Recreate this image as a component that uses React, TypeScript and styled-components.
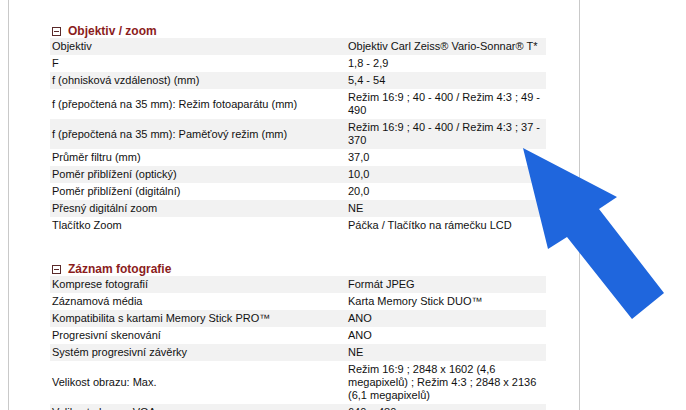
import React from 'react';
import styled, { createGlobalStyle } from 'styled-components';

const GlobalStyle = createGlobalStyle`
  html, body {
    margin: 0;
    padding: 0;
    background: #fff;
  }
  body {
    font-family: 'Liberation Sans', Arial, sans-serif;
    font-size: 11px;
    color: #111;
  }
`;

const Page = styled.div`
  position: relative;
  width: 686px;
  height: 410px;
  overflow: hidden;
`;

const Panel = styled.div`
  margin-left: 8px;
  width: 572px;
  min-height: 410px;
  border-left: 1px solid #c9c9c9;
  border-right: 1px solid #c9c9c9;
  padding: 24px 0 0 41px;
  box-sizing: border-box;
`;

const Section = styled.section`
  width: 488px;
  & + & {
    margin-top: 28px;
  }
`;

const SectionHeading = styled.h3`
  display: flex;
  align-items: center;
  gap: 7px;
  height: 14px;
  margin: 0;
  padding-left: 2px;
  font-size: 12px;
  font-weight: bold;
  color: #8b1c1c;
`;

const CollapseIcon = styled.span`
  position: relative;
  width: 9px;
  height: 9px;
  box-sizing: border-box;
  border: 1px solid #5a2a2a;
  &::after {
    content: '';
    position: absolute;
    left: 1px;
    right: 1px;
    top: 3px;
    height: 1px;
    background: #5a2a2a;
  }
`;

const SpecTable = styled.table`
  width: 488px;
  border-collapse: collapse;
  table-layout: fixed;
`;

const Row = styled.tr<{ $shaded: boolean }>`
  background: ${(p) => (p.$shaded ? '#f2f2f2' : '#fff')};
`;

const Cell = styled.td<{ $value?: boolean }>`
  width: ${(p) => (p.$value ? '196px' : '292px')};
  padding: 2px 2px;
  line-height: 13px;
  vertical-align: middle;
  color: #111;
`;

type Spec = [string, string];

const lensSpecs: Spec[] = [
  ['Objektiv', 'Objektiv Carl Zeiss® Vario-Sonnar® T*'],
  ['F', '1,8 - 2,9'],
  ['f (ohnisková vzdálenost) (mm)', '5,4 - 54'],
  ['f (přepočtená na 35 mm): Režim fotoaparátu (mm)', 'Režim 16:9 ; 40 - 400 / Režim 4:3 ; 49 - 490'],
  ['f (přepočtená na 35 mm): Paměťový režim (mm)', 'Režim 16:9 ; 40 - 400 / Režim 4:3 ; 37 - 370'],
  ['Průměr filtru (mm)', '37,0'],
  ['Poměr přiblížení (optický)', '10,0'],
  ['Poměr přiblížení (digitální)', '20,0'],
  ['Přesný digitální zoom', 'NE'],
  ['Tlačítko Zoom', 'Páčka / Tlačítko na rámečku LCD'],
];

const recordSpecs: Spec[] = [
  ['Komprese fotografií', 'Formát JPEG'],
  ['Záznamová média', 'Karta Memory Stick DUO™'],
  ['Kompatibilita s kartami Memory Stick PRO™', 'ANO'],
  ['Progresivní skenování', 'ANO'],
  ['Systém progresivní závěrky', 'NE'],
  ['Velikost obrazu: Max.', 'Režim 16:9 ; 2848 x 1602 (4,6 megapixelů) ; Režim 4:3 ; 2848 x 2136 (6,1 megapixelů)'],
  ['Velikost obrazu: VGA', '640 x 480'],
];

const Arrow = styled.svg`
  position: absolute;
  left: 0;
  top: 0;
  pointer-events: none;
`;

function SpecSection({ title, rows }: { title: string; rows: Spec[] }) {
  return (
    <Section>
      <SectionHeading>
        <CollapseIcon />
        {title}
      </SectionHeading>
      <SpecTable>
        <tbody>
          {rows.map(([label, value], i) => (
            <Row key={label} $shaded={i % 2 === 0}>
              <Cell>{label}</Cell>
              <Cell $value>{value}</Cell>
            </Row>
          ))}
        </tbody>
      </SpecTable>
    </Section>
  );
}

export default function App() {
  return (
    <Page>
      <GlobalStyle />
      <Panel>
        <SpecSection title="Objektiv / zoom" rows={lensSpecs} />
        <SpecSection title="Záznam fotografie" rows={recordSpecs} />
      </Panel>
      <Arrow width="686" height="410" viewBox="0 0 686 410">
        <polygon
          points="523,148 617,197 599,209 664,293 632,319 567,237 548,249"
          fill="#1f66dd"
        />
      </Arrow>
    </Page>
  );
}
